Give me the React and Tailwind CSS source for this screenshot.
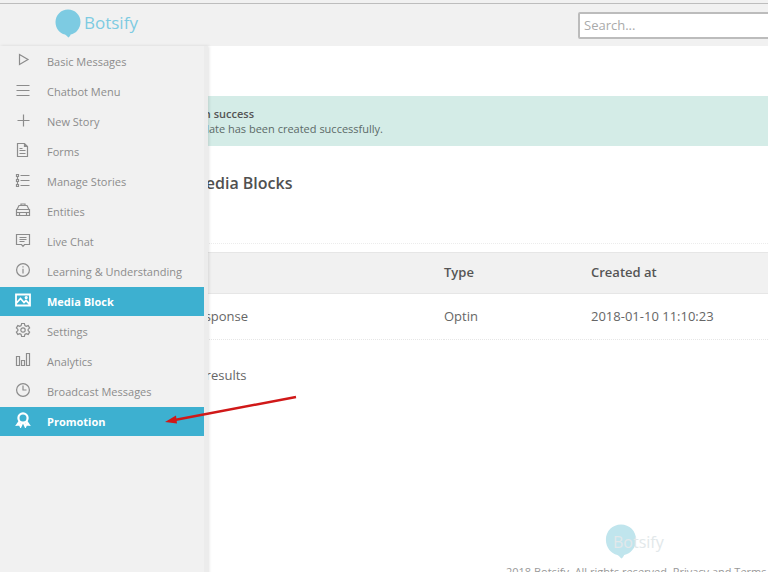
import React, { Component } from 'react';

const icons = {
  play: <path d="M4.5 2.5 L13 7.5 L4.5 12.5 Z" />,
  menu: <path d="M1.5 3.5 H14.5 M1.5 8.5 H14.5 M1.5 13.5 H14.5" />,
  plus: <path d="M8.5 2.5 V14.5 M2.5 8.5 H14.5" />,
  file: <path d="M2.5 1.5 H9.5 L12.5 4.5 V14.5 H2.5 Z M9.5 1.5 V4.5 H12.5 M4.5 6.5 H7.5 M4.5 8.5 H10.5 M4.5 11.5 H10.5" />,
  list: <path d="M5.5 3.5 H14.5 M5.5 8.5 H14.5 M5.5 13.5 H14.5 M1.5 2.5 H3.5 V4.5 H1.5 Z M1.5 7.5 H3.5 V9.5 H1.5 Z M1.5 12.5 H3.5 V14.5 H1.5 Z M2.5 4.5 V7.5 M2.5 9.5 V12.5" />,
  car: <path d="M1.5 7.5 H14.5 V13.5 H1.5 Z M2 7.5 L4 3.5 H12 L14 7.5 M6 3.5 V2 H10 V3.5 M1.5 10.5 H4.5 M11.5 10.5 H14.5 M4.5 13.5 V10.5 H11.5 V13.5" />,
  chat: <path d="M1.5 2.5 H14.5 V12.5 H9.5 L8 14.3 L6.5 12.5 H1.5 Z M4.5 5.5 H11.5 M4.5 7.5 H11.5 M4.5 9.5 H9.5" />,
  info: <g><circle cx="8" cy="8" r="6.4" /><path d="M8 6.8 V11.5 M8 4.3 V5.6" /></g>,
  image: <g strokeWidth="1.8"><path d="M1 2.5 H15 V13.5 H1 Z M1.5 11 L5.5 6.5 L9 10.5 L11 8.5 L14.5 12" /><circle cx="11.2" cy="5.6" r="0.7" /></g>,
  gear: <g><path d="M6.6 1.5 H9.4 L9.9 3.6 L11.2 4.3 L13.2 3.6 L14.6 6 L13.1 7.4 V8.6 L14.6 10 L13.2 12.4 L11.2 11.7 L9.9 12.4 L9.4 14.5 H6.6 L6.1 12.4 L4.8 11.7 L2.8 12.4 L1.4 10 L2.9 8.6 V7.4 L1.4 6 L2.8 3.6 L4.8 4.3 L6.1 3.6 Z" /><circle cx="8" cy="8" r="2.2" /></g>,
  bars: <path d="M1.5 4.5 H4.5 V13.5 H1.5 Z M6.5 8.5 H9.5 V13.5 H6.5 Z M11.5 1.5 H14.5 V13.5 H11.5 Z" />,
  clock: <g><circle cx="8" cy="8" r="6.4" /><path d="M8 3.5 V8 H11.5" /></g>,
  award: <g strokeWidth="2.2"><circle cx="8" cy="6" r="4.6" /><path d="M4.8 9.2 L2.4 12.6 L4.8 12.4 L5.6 14.2 L7.2 10.8 M11.2 9.2 L13.6 12.6 L11.2 12.4 L10.4 14.2 L8.8 10.8" /></g>
};

const items = [
  { icon: 'play', name: 'Basic Messages' },
  { icon: 'menu', name: 'Chatbot Menu' },
  { icon: 'plus', name: 'New Story' },
  { icon: 'file', name: 'Forms' },
  { icon: 'list', name: 'Manage Stories' },
  { icon: 'car', name: 'Entities' },
  { icon: 'chat', name: 'Live Chat' },
  { icon: 'info', name: 'Learning & Understanding' },
  { icon: 'image', name: 'Media Block', active: true },
  { icon: 'gear', name: 'Settings' },
  { icon: 'bars', name: 'Analytics' },
  { icon: 'clock', name: 'Broadcast Messages' },
  { icon: 'award', name: 'Promotion', active: true }
];

const blocks = [
  { id: 1, name: 'Optin Response', type: 'Optin', createdAt: '2018-01-10 11:10:23' }
];

function Bubble({ className }) {
  return <svg className={className} viewBox="0 0 26 29" aria-hidden="true">
    <path fill="currentColor" d="M13 0.5 C20 0.5 25.5 6 25.5 13 C25.5 19.5 21 24.6 15.6 25.6 C15.2 26.8 14.4 28 13.2 28.6 C12.6 27.6 11.4 26.4 10 25.6 C4.6 24.4 0.5 19.4 0.5 13 C0.5 6 6 0.5 13 0.5 Z" />
  </svg>;
}

function NavItem({ item }) {
  return <li>
    <a href="#" className={item.active
      ? 'flex h-[29px] items-center gap-4 bg-[#3db0d0] pl-[15px] pt-0.5 font-bold text-white'
      : 'flex h-[29px] items-center gap-4 pl-[15px] pt-0.5 text-[#8c8c8c]'}>
      <svg className="mb-1.5 h-4 w-4" viewBox="0 0 16 16" fill="none" stroke="currentColor" strokeWidth="1.2" aria-hidden="true">
        {icons[item.icon]}
      </svg>
      <span>{item.name}</span>
    </a>
  </li>;
}

class App extends Component {

  render() {
    return <div className="relative flex h-screen flex-col overflow-hidden bg-white font-['Open_Sans',sans-serif] text-[13px] text-[#666]">
      <header className="flex h-[46px] shrink-0 flex-col bg-[#f1f1f1]">
        <div className="h-1 shrink-0 border-b border-[#bdbdbd]" />
        <div className="flex flex-1 items-center pl-[55px]">
          <a href="#" className="flex items-center gap-[3px] pb-1 text-[#7dcbe2]">
            <Bubble className="h-[29px] w-[26px]" />
            <span className="text-[17px] leading-6">Botsify</span>
          </a>
          <input type="text" aria-label="Search" placeholder="Search..."
            className="-mr-[50px] ml-auto h-[27px] w-60 shrink-0 rounded-xs border-2 border-[#bcbcbc] bg-white px-1 placeholder:text-[#aaa]" />
        </div>
      </header>

      <div className="relative flex-1">
        <main className="flex flex-col">
          <div className="mt-[50px] h-[50px] bg-[#d4ece7] py-[10px] pl-[177px] text-[11px] leading-[15px] text-[#5c6a68]">
            <p className="font-semibold text-[#555]">Action success</p>
            <p>Template has been created successfully.</p>
          </div>

          <h1 className="mt-6 pl-[191px] text-[16px] font-semibold leading-[26px] text-[#505050]">Media Blocks</h1>

          <div className="mt-[47px] border-t border-dotted border-[#ececec] pt-2">
            <table className="w-full table-fixed text-left">
              <thead className="border-y border-[#e6e6e6] bg-[#f1f1f1] text-[#555]">
                <tr className="h-[41px]">
                  <th className="w-[444px]" aria-label="Name" />
                  <th className="w-[147px] font-semibold">Type</th>
                  <th className="font-semibold">Created at</th>
                </tr>
              </thead>
              <tbody>
                {blocks.map(block => <tr key={block.id} className="h-[46px] border-b border-dotted border-[#e6e6e6]">
                  <td className="pl-[152px]">{block.name}</td>
                  <td>{block.type}</td>
                  <td>{block.createdAt}</td>
                </tr>)}
              </tbody>
            </table>
          </div>

          <p className="mt-[25px] pl-[153px] leading-5">Found 1 results</p>

          <footer className="mt-[139px] flex flex-col text-[11px] text-[#999]">
            <a href="#" className="flex items-center pl-[605px] text-[#c0e5ed]">
              <Bubble className="h-[35px] w-8" />
              <span className="-ml-6 text-[16px] leading-6 text-[#e2e8ea]">Botsify</span>
            </a>
            <p className="mt-1 whitespace-nowrap pl-[506px] leading-[18px]">2018 Botsify. All rights reserved. <a href="#">Privacy and Terms</a></p>
          </footer>
        </main>

        <aside className="absolute inset-y-0 left-0 w-[208px] border-r-4 border-[#ececec] bg-[#f1f1f1] shadow-[1px_0_3px_rgba(0,0,0,0.12)]">
          <nav>
            <ul className="flex flex-col gap-px pt-px text-[11px]">
              {items.map(item => <NavItem key={item.name} item={item} />)}
            </ul>
          </nav>
        </aside>
      </div>

      {/* pointer to the promotion entry */}
      <svg className="pointer-events-none absolute left-[164px] top-[394px] h-8 w-[136px]" viewBox="0 0 136 32" aria-hidden="true">
        <path d="M8 26.5 L132 3" stroke="#d01818" strokeWidth="2.4" fill="none" />
        <path d="M1 28 L12 21.5 L13 29.5 Z" fill="#d01818" />
      </svg>
    </div>;
  }
}

export default App;
